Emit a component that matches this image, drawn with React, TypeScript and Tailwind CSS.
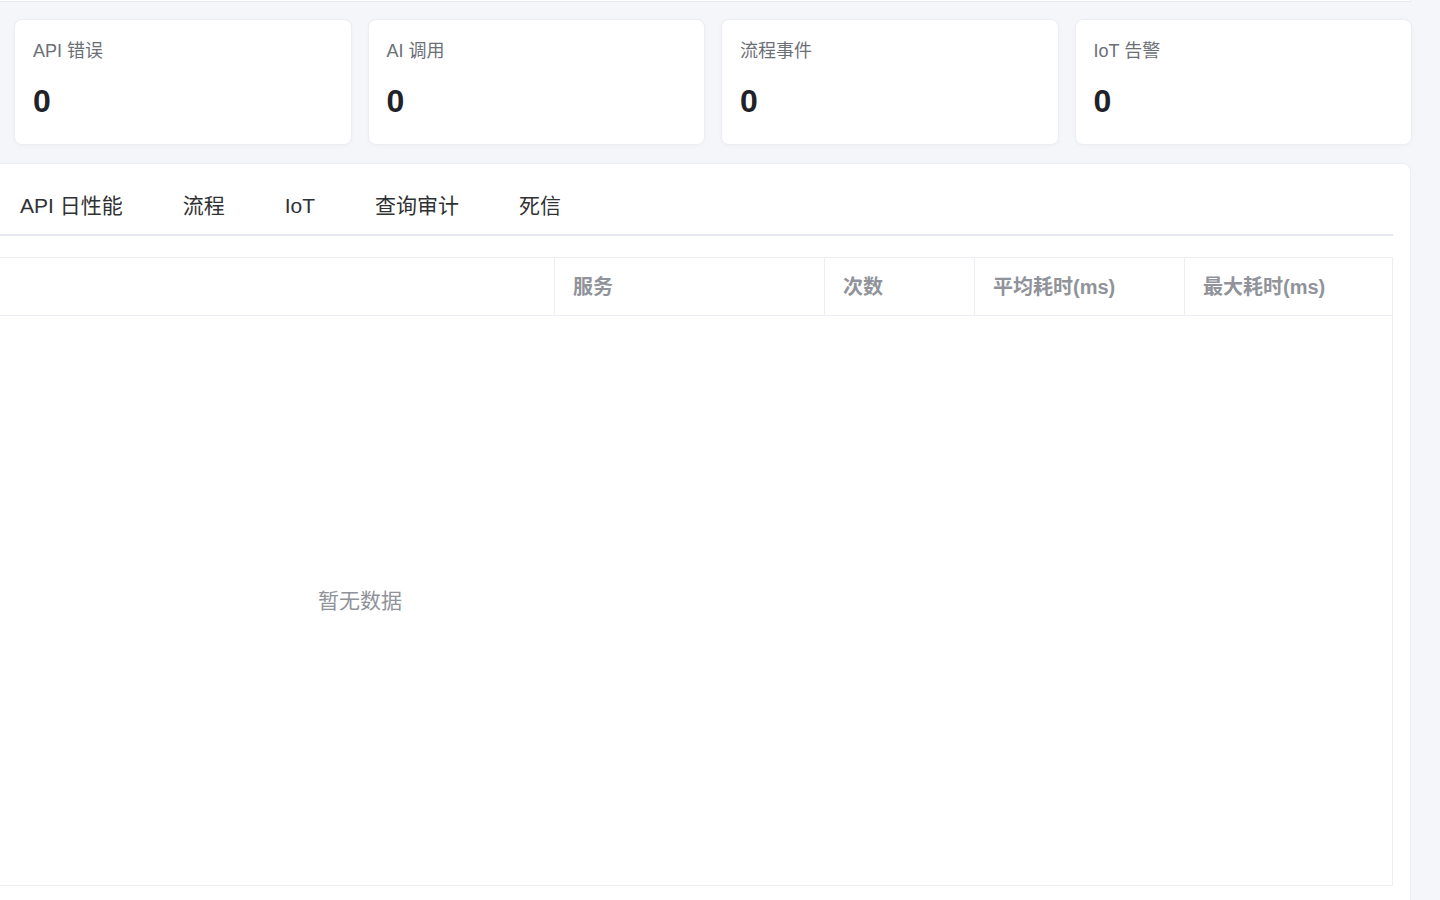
const stats = [
  { label: 'API 错误', value: 0 },
  { label: 'AI 调用', value: 0 },
  { label: '流程事件', value: 0 },
  { label: 'IoT 告警', value: 0 },
]

const tabs = ['API 日性能', '流程', 'IoT', '查询审计', '死信']

const columns = [
  { title: '', width: 'w-[554px]' },
  { title: '服务', width: 'w-[270px]' },
  { title: '次数', width: 'w-[150px]' },
  { title: '平均耗时(ms)', width: 'w-[210px]' },
  { title: '最大耗时(ms)', width: 'flex-1' },
]

export default function App() {
  return (
    <div className="h-[900px] w-[1440px] overflow-hidden bg-[#f4f6f9] font-['Liberation_Sans','Noto_Sans_CJK_SC',sans-serif]">
      {/* bottom edge of the card above */}
      <div className="h-[2px] w-[1411px] rounded-br-lg border-b border-r border-[#e6e9ef] bg-white" />

      <div className="ml-[14px] mt-[17px] grid w-[1398px] grid-cols-4 gap-4">
        {stats.map((s) => (
          <div
            key={s.label}
            className="h-[126px] rounded-lg border border-[#ebeef5] bg-white px-[18px] pt-[20px] shadow-[0_1px_4px_rgba(0,0,0,0.03)]"
          >
            <div className="text-[18px] leading-[22px] text-[#6b6f76]">{s.label}</div>
            <div className="mt-[21px] text-[32px] font-bold leading-[36px] text-[#1f2329]">
              {s.value}
            </div>
          </div>
        ))}
      </div>

      <div className="mt-[18px] h-[760px] w-[1411px] rounded-tr-lg border-r border-t border-[#ebeef5] bg-white pr-[17px] pt-[14px]">
        <div className="flex h-[58px] items-center border-b-2 border-[#e4e7ed]">
          {tabs.map((t, i) => (
            <div
              key={t}
              className={
                i === 0
                  ? 'pl-[20px] pr-[30px] text-[21px] text-[#303133]'
                  : 'px-[30px] text-[21px] text-[#303133]'
              }
            >
              {t}
            </div>
          ))}
        </div>

        <div className="mt-[21px] flex h-[629px] flex-col border-b border-r border-t border-[#ebeef5]">
          <div className="flex h-[58px] border-b border-[#ebeef5]">
            {columns.map((c, i) => (
              <div
                key={i}
                className={`${c.width} flex items-center ${i > 0 ? 'border-l border-[#ebeef5] pl-[18px]' : ''} text-[20px] font-bold text-[#909399]`}
              >
                {c.title}
              </div>
            ))}
          </div>
          <div className="flex flex-1 items-center">
            <div className="w-[720px] text-center text-[21px] text-[#909399]">暂无数据</div>
          </div>
        </div>
      </div>
    </div>
  )
}
